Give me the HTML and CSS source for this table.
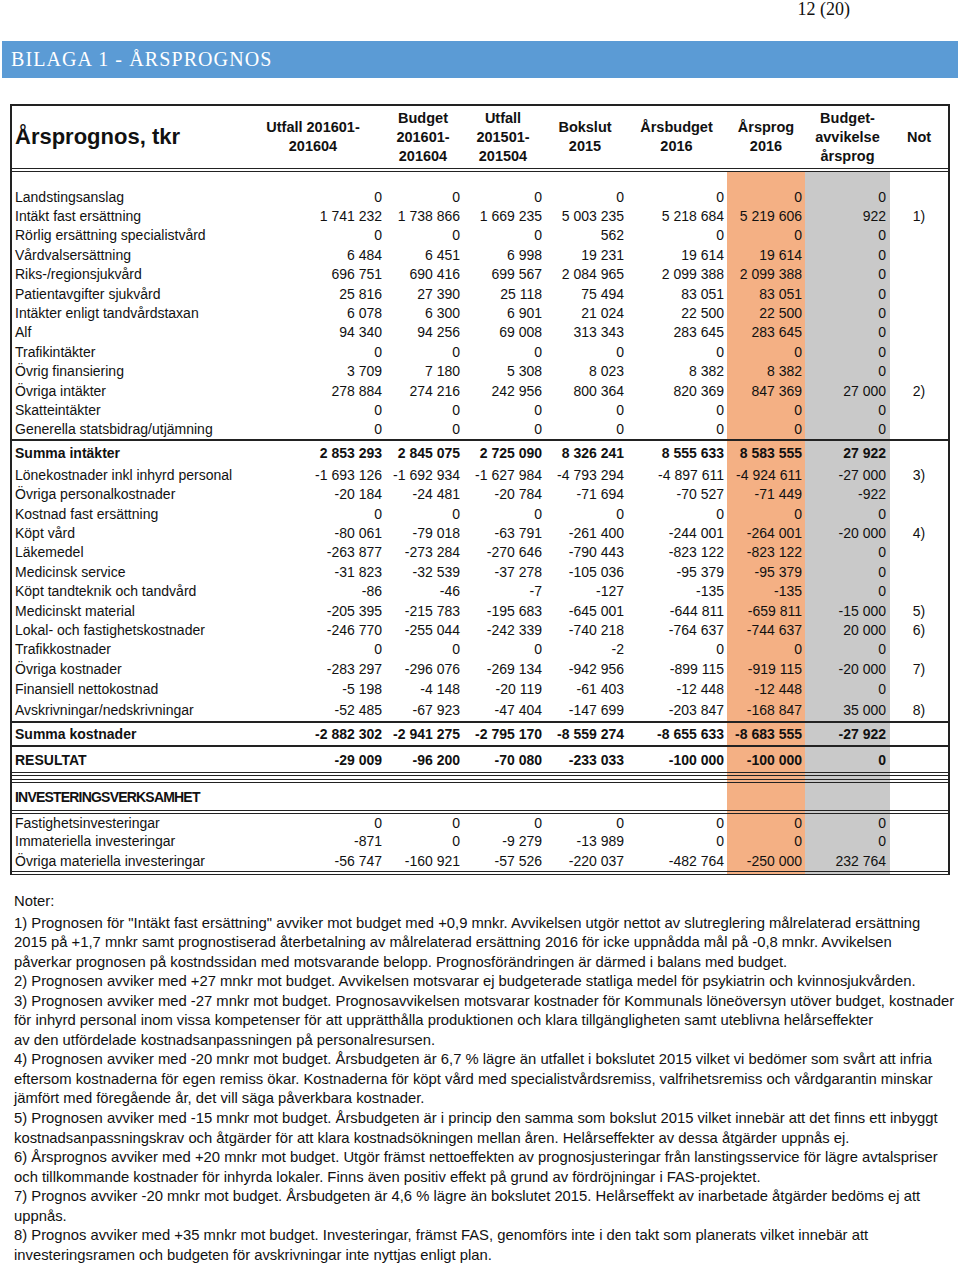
FILE: index.html
```html
<!DOCTYPE html>
<html lang="sv">
<head>
<meta charset="utf-8">
<title>Bilaga 1 - Årsprognos</title>
<link rel="stylesheet" href="styles.css">
</head>
<body>
<div class="pagenum">12 (20)</div>
<div class="banner">BILAGA 1 - ÅRSPROGNOS</div>

<div class="sheet">
<table class="prog">
<colgroup>
<col class="c-label"><col class="c-1"><col class="c-2"><col class="c-3"><col class="c-4"><col class="c-5"><col class="c-6"><col class="c-7"><col class="c-8">
</colgroup>
<thead>
<tr>
<th class="title">Årsprognos, tkr</th>
<th>Utfall 201601-<br>201604</th>
<th>Budget<br>201601-<br>201604</th>
<th>Utfall<br>201501-<br>201504</th>
<th>Bokslut<br>2015</th>
<th>Årsbudget<br>2016</th>
<th>Årsprog<br>2016</th>
<th>Budget-<br>avvikelse<br>årsprog</th>
<th>Not</th>
</tr>
</thead>
<tbody>
<tr class="spacer"><td></td><td></td><td></td><td></td><td></td><td></td><td></td><td></td><td></td></tr>
<tr><td>Landstingsanslag</td><td>0</td><td>0</td><td>0</td><td>0</td><td>0</td><td>0</td><td>0</td><td></td></tr>
<tr><td>Intäkt fast ersättning</td><td>1 741 232</td><td>1 738 866</td><td>1 669 235</td><td>5 003 235</td><td>5 218 684</td><td>5 219 606</td><td>922</td><td>1)</td></tr>
<tr><td>Rörlig ersättning specialistvård</td><td>0</td><td>0</td><td>0</td><td>562</td><td>0</td><td>0</td><td>0</td><td></td></tr>
<tr><td>Vårdvalsersättning</td><td>6 484</td><td>6 451</td><td>6 998</td><td>19 231</td><td>19 614</td><td>19 614</td><td>0</td><td></td></tr>
<tr><td>Riks-/regionsjukvård</td><td>696 751</td><td>690 416</td><td>699 567</td><td>2 084 965</td><td>2 099 388</td><td>2 099 388</td><td>0</td><td></td></tr>
<tr><td>Patientavgifter sjukvård</td><td>25 816</td><td>27 390</td><td>25 118</td><td>75 494</td><td>83 051</td><td>83 051</td><td>0</td><td></td></tr>
<tr><td>Intäkter enligt tandvårdstaxan</td><td>6 078</td><td>6 300</td><td>6 901</td><td>21 024</td><td>22 500</td><td>22 500</td><td>0</td><td></td></tr>
<tr><td>Alf</td><td>94 340</td><td>94 256</td><td>69 008</td><td>313 343</td><td>283 645</td><td>283 645</td><td>0</td><td></td></tr>
<tr><td>Trafikintäkter</td><td>0</td><td>0</td><td>0</td><td>0</td><td>0</td><td>0</td><td>0</td><td></td></tr>
<tr><td>Övrig finansiering</td><td>3 709</td><td>7 180</td><td>5 308</td><td>8 023</td><td>8 382</td><td>8 382</td><td>0</td><td></td></tr>
<tr><td>Övriga intäkter</td><td>278 884</td><td>274 216</td><td>242 956</td><td>800 364</td><td>820 369</td><td>847 369</td><td>27 000</td><td>2)</td></tr>
<tr><td>Skatteintäkter</td><td>0</td><td>0</td><td>0</td><td>0</td><td>0</td><td>0</td><td>0</td><td></td></tr>
<tr><td>Generella statsbidrag/utjämning</td><td>0</td><td>0</td><td>0</td><td>0</td><td>0</td><td>0</td><td>0</td><td></td></tr>
<tr class="sum sum-in"><td>Summa intäkter</td><td>2 853 293</td><td>2 845 075</td><td>2 725 090</td><td>8 326 241</td><td>8 555 633</td><td>8 583 555</td><td>27 922</td><td></td></tr>
<tr><td>Lönekostnader inkl inhyrd personal</td><td>-1 693 126</td><td>-1 692 934</td><td>-1 627 984</td><td>-4 793 294</td><td>-4 897 611</td><td>-4 924 611</td><td>-27 000</td><td>3)</td></tr>
<tr><td>Övriga personalkostnader</td><td>-20 184</td><td>-24 481</td><td>-20 784</td><td>-71 694</td><td>-70 527</td><td>-71 449</td><td>-922</td><td></td></tr>
<tr><td>Kostnad fast ersättning</td><td>0</td><td>0</td><td>0</td><td>0</td><td>0</td><td>0</td><td>0</td><td></td></tr>
<tr><td>Köpt vård</td><td>-80 061</td><td>-79 018</td><td>-63 791</td><td>-261 400</td><td>-244 001</td><td>-264 001</td><td>-20 000</td><td>4)</td></tr>
<tr><td>Läkemedel</td><td>-263 877</td><td>-273 284</td><td>-270 646</td><td>-790 443</td><td>-823 122</td><td>-823 122</td><td>0</td><td></td></tr>
<tr><td>Medicinsk service</td><td>-31 823</td><td>-32 539</td><td>-37 278</td><td>-105 036</td><td>-95 379</td><td>-95 379</td><td>0</td><td></td></tr>
<tr><td>Köpt tandteknik och tandvård</td><td>-86</td><td>-46</td><td>-7</td><td>-127</td><td>-135</td><td>-135</td><td>0</td><td></td></tr>
<tr><td>Medicinskt material</td><td>-205 395</td><td>-215 783</td><td>-195 683</td><td>-645 001</td><td>-644 811</td><td>-659 811</td><td>-15 000</td><td>5)</td></tr>
<tr><td>Lokal- och fastighetskostnader</td><td>-246 770</td><td>-255 044</td><td>-242 339</td><td>-740 218</td><td>-764 637</td><td>-744 637</td><td>20 000</td><td>6)</td></tr>
<tr><td>Trafikkostnader</td><td>0</td><td>0</td><td>0</td><td>-2</td><td>0</td><td>0</td><td>0</td><td></td></tr>
<tr><td>Övriga kostnader</td><td>-283 297</td><td>-296 076</td><td>-269 134</td><td>-942 956</td><td>-899 115</td><td>-919 115</td><td>-20 000</td><td>7)</td></tr>
<tr class="fin"><td>Finansiell nettokostnad</td><td>-5 198</td><td>-4 148</td><td>-20 119</td><td>-61 403</td><td>-12 448</td><td>-12 448</td><td>0</td><td></td></tr>
<tr class="avskr"><td>Avskrivningar/nedskrivningar</td><td>-52 485</td><td>-67 923</td><td>-47 404</td><td>-147 699</td><td>-203 847</td><td>-168 847</td><td>35 000</td><td>8)</td></tr>
<tr class="sum sum-cost"><td>Summa kostnader</td><td>-2 882 302</td><td>-2 941 275</td><td>-2 795 170</td><td>-8 559 274</td><td>-8 655 633</td><td>-8 683 555</td><td>-27 922</td><td></td></tr>
<tr class="sum result"><td>RESULTAT</td><td>-29 009</td><td>-96 200</td><td>-70 080</td><td>-233 033</td><td>-100 000</td><td>-100 000</td><td>0</td><td></td></tr>
<tr class="gap"><td></td><td></td><td></td><td></td><td></td><td></td><td></td><td></td><td></td></tr>
<tr class="section"><td>INVESTERINGSVERKSAMHET</td><td></td><td></td><td></td><td></td><td></td><td></td><td></td><td></td></tr>
<tr class="inv-first"><td>Fastighetsinvesteringar</td><td>0</td><td>0</td><td>0</td><td>0</td><td>0</td><td>0</td><td>0</td><td></td></tr>
<tr class="inv-mid"><td>Immateriella investeringar</td><td>-871</td><td>0</td><td>-9 279</td><td>-13 989</td><td>0</td><td>0</td><td>0</td><td></td></tr>
<tr class="inv-last"><td>Övriga materiella investeringar</td><td>-56 747</td><td>-160 921</td><td>-57 526</td><td>-220 037</td><td>-482 764</td><td>-250 000</td><td>232 764</td><td></td></tr>
</tbody>
</table>
</div>

<div class="notes">
<p class="note noter">Noter:</p>
<p class="note">1) Prognosen för "Intäkt fast ersättning" avviker mot budget med +0,9 mnkr. Avvikelsen utgör nettot av slutreglering målrelaterad ersättning<br>2015 på +1,7 mnkr samt prognostiserad återbetalning av målrelaterad ersättning 2016 för icke uppnådda mål på -0,8 mnkr. Avvikelsen<br>påverkar prognosen på kostndssidan med motsvarande belopp. Prognosförändringen är därmed i balans med budget.</p>
<p class="note">2) Prognosen avviker med +27 mnkr mot budget. Avvikelsen motsvarar ej budgeterade statliga medel för psykiatrin och kvinnosjukvården.</p>
<p class="note">3) Prognosen avviker med -27 mnkr mot budget. Prognosavvikelsen motsvarar kostnader för Kommunals löneöversyn utöver budget, kostnader<br>för inhyrd personal inom vissa kompetenser för att upprätthålla produktionen och klara tillgängligheten samt uteblivna helårseffekter<br>av den utfördelade kostnadsanpassningen på personalresursen.</p>
<p class="note">4) Prognosen avviker med -20 mnkr mot budget. Årsbudgeten är 6,7 % lägre än utfallet i bokslutet 2015 vilket vi bedömer som svårt att infria<br>eftersom kostnaderna för egen remiss ökar. Kostnaderna för köpt vård med specialistvårdsremiss, valfrihetsremiss och vårdgarantin minskar<br>jämfört med föregående år, det vill säga påverkbara kostnader.</p>
<p class="note">5) Prognosen avviker med -15 mnkr mot budget. Årsbudgeten är i princip den samma som bokslut 2015 vilket innebär att det finns ett inbyggt<br>kostnadsanpassningskrav och åtgärder för att klara kostnadsökningen mellan åren. Helårseffekter av dessa åtgärder uppnås ej.</p>
<p class="note">6) Årsprognos avviker med +20 mnkr mot budget. Utgör främst nettoeffekten av prognosjusteringar från lanstingsservice för lägre avtalspriser<br>och tillkommande kostnader för inhyrda lokaler. Finns även positiv effekt på grund av fördröjningar i FAS-projektet.</p>
<p class="note">7) Prognos avviker -20 mnkr mot budget. Årsbudgeten är 4,6 % lägre än bokslutet 2015. Helårseffekt av inarbetade åtgärder bedöms ej att<br>uppnås.</p>
<p class="note">8) Prognos avviker med +35 mnkr mot budget. Investeringar, främst FAS, genomförs inte i den takt som planerats vilket innebär att<br>investeringsramen och budgeten för avskrivningar inte nyttjas enligt plan.</p>
</div>
</body>
</html>
```

FILE: styles.css
```css
html, body {
  margin: 0;
  padding: 0;
  background: #ffffff;
}

body {
  width: 960px;
  font-family: "Liberation Sans", Arial, sans-serif;
  color: #111111;
}

.pagenum {
  height: 41px;
  box-sizing: border-box;
  padding-right: 110px;
  text-align: right;
  font-family: "Liberation Serif", "Times New Roman", serif;
  font-size: 18px;
  line-height: 18px;
  color: #111111;
}

.banner {
  margin: 0 2px;
  height: 36.5px;
  padding-left: 9px;
  background: #5b9bd5;
  color: #ffffff;
  font-family: "Liberation Serif", "Times New Roman", serif;
  font-size: 20px;
  line-height: 36px;
  letter-spacing: 1.1px;
}

.sheet {
  margin: 26.5px 0 0 10px;
}

.prog {
  width: 940px;
  table-layout: fixed;
  border-collapse: separate;
  border-spacing: 0;
  border: 2px solid #222222;
  border-bottom: 0;
}

.c-label { width: 230px; }
.c-1 { width: 142px; }
.c-2 { width: 78px; }
.c-3 { width: 82px; }
.c-4 { width: 82px; }
.c-5 { width: 101px; }
.c-6 { width: 78px; }
.c-7 { width: 85px; }
.c-8 { width: 58px; }

.prog th {
  box-sizing: border-box;
  height: 66px;
  padding: 0;
  border-bottom: 4px double #222222;
  font-size: 14.5px;
  line-height: 19px;
  font-weight: bold;
  text-align: center;
  vertical-align: middle;
  white-space: nowrap;
}

.prog th.title {
  text-align: left;
  padding-left: 3px;
  font-size: 22px;
  line-height: 26px;
}

.prog td {
  box-sizing: border-box;
  height: 19.4px;
  padding: 0 2px 0 0;
  font-size: 14px;
  line-height: 16px;
  text-align: right;
  vertical-align: middle;
  white-space: nowrap;
}

.prog td:first-child {
  text-align: left;
  padding: 0 0 0 3px;
}

.prog td:nth-child(6) {
  padding-right: 3px;
}

.prog td:nth-child(7) {
  background: #f4b084;
  padding-right: 3px;
}

.prog td:nth-child(8) {
  background: #c9c9c9;
  padding-right: 4px;
}

.prog td:nth-child(9) {
  text-align: center;
  padding: 0;
}

.prog .spacer td {
  height: 15px;
}

.prog .sum td {
  font-weight: bold;
  border-top: 2px solid #222222;
}

.prog .sum-in td {
  height: 26px;
}

.prog .fin td {
  height: 21.6px;
}

.prog .avskr td {
  height: 21px;
}

.prog .sum-cost td {
  height: 24px;
}

.prog .result td {
  height: 31px;
  padding-top: 2px;
  border-bottom: 4px double #222222;
}

.prog .gap td {
  height: 3px;
}

.prog .section td {
  height: 35px;
  padding-top: 2px;
  border-top: 4px double #222222;
  border-bottom: 4px double #222222;
}

.prog .section td:first-child {
  font-weight: bold;
  letter-spacing: -0.8px;
}

.prog .inv-first td {
  height: 17.5px;
}

.prog .inv-mid td {
  height: 19.5px;
}

.prog .inv-last td {
  height: 24px;
  border-bottom: 4px double #222222;
}

.notes {
  margin-top: 17.5px;
  padding-left: 14px;
  font-size: 14.8px;
  line-height: 19.55px;
  white-space: nowrap;
  color: #111111;
}

.note {
  margin: 0;
}

.noter {
  margin-bottom: 1.5px;
}
```
